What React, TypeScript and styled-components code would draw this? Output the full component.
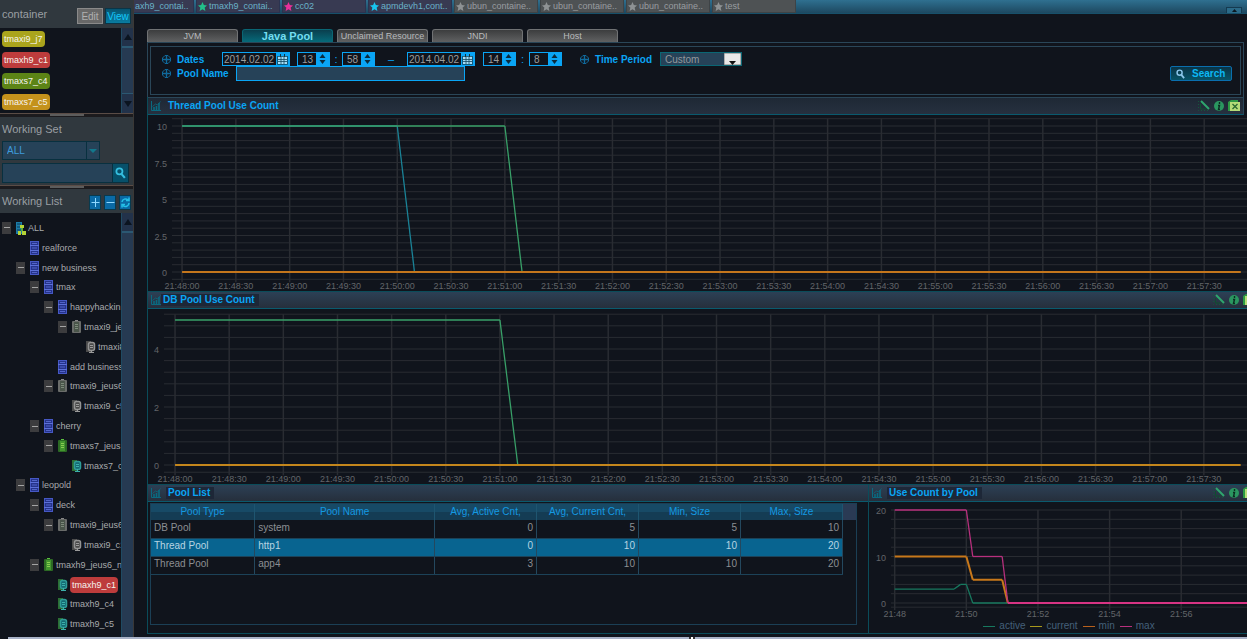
import React from 'react';
import styled, { createGlobalStyle, css } from 'styled-components';

const sans = '"Liberation Sans", sans-serif';

const c = {
  bg: '#10141c',
  side: '#30383e',
  teal: '#0a4c5a',
  steel: '#2a4658',
  blue: '#0aa5f5',
  field: '#264258',
  grid: '#292c32',
  axis: '#626569',
};

const GlobalStyle = createGlobalStyle`
  * { box-sizing: border-box; }
  body { margin: 0; background: ${c.bg}; font-family: ${sans}; font-size: 10px; color: #8c9095; }
  button, input, select { font: inherit; margin: 0; padding: 0; border-radius: 0; outline: none; }
  h1, h2, ul { margin: 0; padding: 0; font-weight: normal; list-style: none; }
`;

const Page = styled.div`
  display: flex;
  overflow: hidden;
`;

/* ---------- sidebar ---------- */

const Sidebar = styled.aside`
  flex: 0 0 134px;
  display: flex;
  flex-direction: column;
  overflow: hidden;
  border-right: 1px solid #3a3836;
  min-width: 0;
`;

const SideHeader = styled.header<{ $height: number }>`
  display: flex;
  align-items: center;
  gap: 2px;
  height: ${(p) => p.$height}px;
  padding: 0 2px;
  background: ${c.side};
`;

const SideTitle = styled.h2`
  flex: 1;
  font-size: 11px;
  line-height: 20px;
  color: #9a9fa3;
`;

const ModeButton = styled.button<{ $active?: boolean }>`
  width: 26px;
  height: 16px;
  margin-top: 4px;
  border: 1px solid ${(p) => (p.$active ? '#0a3547' : '#8a8a8a')};
  background: ${(p) => (p.$active ? 'linear-gradient(#075470, #0a7ca0)' : '#686868')};
  color: ${(p) => (p.$active ? '#14c8fa' : '#b0b0b0')};
  font-size: 10px;
  line-height: 13px;
`;

const Scrolled = styled.div<{ $grow?: boolean }>`
  display: flex;
  overflow: hidden;
  ${(p) => p.$grow ? css`flex: 1;` : css`height: 85px;`}
`;

const Tags = styled.ul`
  flex: 1;
  display: flex;
  flex-direction: column;
  align-items: flex-start;
  gap: 5px;
  padding: 3px 2px;
`;

const Tag = styled.li<{ $color: string }>`
  height: 16px;
  padding: 0 2px;
  border-radius: 4px;
  background: ${(p) => p.$color};
  color: #f6f4ee;
  font-size: 9px;
  line-height: 16px;
  white-space: nowrap;
`;

const Track = styled.div`
  flex: 0 0 12px;
  display: flex;
  flex-direction: column;
  justify-content: space-between;
  background: #263a52;
  border-left: 1px solid #1f4a62;
`;

const ArrowButton = styled.button`
  display: grid;
  place-items: center;
  height: 20px;
  border: 0;
  border-bottom: 2px solid #2b5872;
  background: #22324a;
  &:last-child:not(:first-child) { border-bottom: 0; border-top: 1px solid #2b5872; }
`;

const Splitter = styled.div`
  height: 4px;
  flex: none;
  display: flex;
  justify-content: center;
  background: #1c1b1e;
  border-top: 1px solid #5a4c46;
  &::before { content: ''; width: 34px; height: 2px; background: #5c5c5c; }
`;

const SetSection = styled.section`
  display: flex;
  flex-direction: column;
  height: 68px;
  padding: 2px;
  background: ${c.side};
`;

const ComboWrap = styled.div`
  display: flex;
  align-items: center;
  position: relative;
  width: 98px;
  height: 19px;
  margin: 1px 0 3px;
  border: 1px solid #08303f;
  background: ${c.field};
`;

const SideSelect = styled.select`
  appearance: none;
  width: 100%;
  height: 17px;
  padding-left: 4px;
  border: 0;
  background: transparent;
  color: #3f9bdc;
  font-size: 10px;
`;

const ComboArrow = styled.svg`
  position: absolute;
  right: 0;
  top: 0;
  pointer-events: none;
`;

const SearchRow = styled.form`
  display: flex;
  width: 127px;
  height: 20px;
  border: 1px solid #08303f;
`;

const SideInput = styled.input`
  flex: 1;
  min-width: 0;
  border: 0;
  background: ${c.field};
  color: #9ab;
`;

const FindButton = styled.button`
  display: grid;
  place-items: center;
  width: 16px;
  border: 0;
  border-left: 1px solid #08303f;
  background: #07506a;
`;

const Squares = styled.div`
  display: flex;
  gap: 3px;
  margin-top: 3px;
`;

const SquareButton = styled.button`
  display: grid;
  place-items: center;
  width: 12px;
  height: 15px;
  border: 1px solid #083a4e;
  background: #0a6aa5;
`;

const Tree = styled.ul`
  flex: 1;
  min-width: 0;
  display: flex;
  flex-direction: column;
  overflow: hidden;
  padding: 5px 0 3px;
`;

const Node = styled.li<{ $depth: number }>`
  flex: 1;
  display: flex;
  align-items: center;
  gap: 2px;
  padding-left: ${(p) => 2 + p.$depth * 14}px;
  white-space: nowrap;
  font-size: 9px;
  color: #a8aaac;
`;

const Toggle = styled.button<{ $shown: boolean }>`
  flex: none;
  display: grid;
  place-items: center;
  width: 9px;
  height: 12px;
  border: 0;
  background: #3c3c3e;
  visibility: ${(p) => (p.$shown ? 'visible' : 'hidden')};
  &::before { content: ''; width: 6px; height: 1px; background: #a4a4a4; }
`;

const Glyph = styled.svg`
  flex: none;
  margin-left: 2px;
`;

type Kind = 'root' | 'group' | 'hostOn' | 'hostOff' | 'appOn' | 'appOff';

function NodeIcon({ kind }: { kind: Kind }) {
  if (kind === 'root') {
    return (
      <Glyph width="11" height="14">
        <rect x="1" y="1" width="6" height="12" fill="#1c7ca8" />
        <path d="M2 3h4M2 6h4M2 9h4" stroke="#0b3b58" />
        <path d="M5 4h4v3h-4zM3 10h3v4h-3zM7 10h4v4h-4z" fill="#b5d437" />
        <path d="M7 7v3" stroke="#4fae3c" strokeWidth="2" />
      </Glyph>
    );
  }
  if (kind === 'group') {
    return (
      <Glyph width="11" height="14">
        <rect x="1.5" y="0.5" width="8" height="13" fill="#26348c" stroke="#4658c4" />
        <path d="M1 4.5h9M1 9.5h9" stroke="#5c70d8" />
        <path d="M3 2.5h5M3 7h5M3 11.5h5" stroke="#5365c8" />
      </Glyph>
    );
  }
  if (kind === 'hostOn' || kind === 'hostOff') {
    const on = kind === 'hostOn';
    return (
      <Glyph width="11" height="14">
        <rect x="1" y="1" width="9" height="12" rx="1" fill={on ? '#2c6a24' : '#6a6c6a'} />
        <rect x="3" y="2" width="5" height="10" fill={on ? '#43962f' : '#4a554a'} />
        <path d="M4 4.5h3M4 6.5h3M4 8.5h3" stroke={on ? '#8acc52' : '#7c8a7a'} />
        <path d="M4 0.5h3" stroke={on ? '#5cc040' : '#888'} />
      </Glyph>
    );
  }
  const on = kind === 'appOn';
  return (
    <Glyph width="11" height="14">
      <path d="M1 1h5v11H1z" fill={on ? '#2c6e34' : '#4c4c4c'} />
      <rect x="3.5" y="2.5" width="6" height="8" rx="2" fill={on ? '#156a74' : '#4a4a4a'} stroke={on ? '#2f9c98' : '#949494'} strokeWidth="1.5" />
      <path d="M5 5.5h3M5 7.500h3M4 12.500h5M6.500 10v2" stroke={on ? '#3cb0aa' : '#9a9a9a'} />
    </Glyph>
  );
}

const nodes: { depth: number; label: string; kind: Kind; open?: boolean; active?: boolean }[] = [
  { depth: 0, label: 'ALL', kind: 'root', open: true },
  { depth: 1, label: 'realforce', kind: 'group' },
  { depth: 1, label: 'new business', kind: 'group', open: true },
  { depth: 2, label: 'tmax', kind: 'group', open: true },
  { depth: 3, label: 'happyhackin', kind: 'group', open: true },
  { depth: 4, label: 'tmaxi9_je', kind: 'hostOff', open: true },
  { depth: 5, label: 'tmaxi8', kind: 'appOff' },
  { depth: 3, label: 'add business', kind: 'group' },
  { depth: 3, label: 'tmaxi9_jeus6', kind: 'hostOff', open: true },
  { depth: 4, label: 'tmaxi9_c5', kind: 'appOff' },
  { depth: 2, label: 'cherry', kind: 'group', open: true },
  { depth: 3, label: 'tmaxs7_jeus', kind: 'hostOn', open: true },
  { depth: 4, label: 'tmaxs7_c', kind: 'appOn' },
  { depth: 1, label: 'leopold', kind: 'group', open: true },
  { depth: 2, label: 'deck', kind: 'group', open: true },
  { depth: 3, label: 'tmaxi9_jeus6', kind: 'hostOff', open: true },
  { depth: 4, label: 'tmaxi9_c1', kind: 'appOff' },
  { depth: 2, label: 'tmaxh9_jeus6_n', kind: 'hostOn', open: true },
  { depth: 3, label: 'tmaxh9_c1', kind: 'appOn', active: true },
  { depth: 3, label: 'tmaxh9_c4', kind: 'appOn' },
  { depth: 3, label: 'tmaxh9_c5', kind: 'appOn' },
];

const Arrow = ({ up, color = '#0b1420' }: { up?: boolean; color?: string }) => (
  <svg width="8" height="6"><path d={up ? 'M4 0L8 6H0z' : 'M0 0H8L4 6z'} fill={color} /></svg>
);

const Lens = ({ color, size = 10 }: { color: string; size?: number }) => (
  <svg width={size} height={size + 1} viewBox="0 0 10 11" fill="none" stroke={color}>
    <circle cx="4" cy="4" r="2.8" strokeWidth="1.6" />
    <path d="M6 6.5l3 3.5" strokeWidth="2" />
  </svg>
);

function Side() {
  return (
    <Sidebar>
      <SideHeader $height={28}>
        <SideTitle>container</SideTitle>
        <ModeButton type="button">Edit</ModeButton>
        <ModeButton type="button" $active>View</ModeButton>
      </SideHeader>
      <Scrolled>
        <Tags>
          <Tag $color="#aaa41c">tmaxi9_j7</Tag>
          <Tag $color="#bd3c3c">tmaxh9_c1</Tag>
          <Tag $color="#5c8416">tmaxs7_c4</Tag>
          <Tag $color="#c4921c">tmaxs7_c5</Tag>
        </Tags>
        <Track>
          <ArrowButton type="button" aria-label="Scroll up"><Arrow up /></ArrowButton>
          <ArrowButton type="button" aria-label="Scroll down"><Arrow /></ArrowButton>
        </Track>
      </Scrolled>
      <Splitter />
      <SetSection>
        <SideTitle as="label" htmlFor="working-set">Working Set</SideTitle>
        <ComboWrap>
          <SideSelect id="working-set"><option>ALL</option></SideSelect>
          <ComboArrow width="13" height="17">
            <path d="M0.5 0v17" stroke="#08303f" />
            <path d="M3 7h8l-4 4z" fill="#12788c" />
          </ComboArrow>
        </ComboWrap>
        <SearchRow onSubmit={(e) => e.preventDefault()}>
          <SideInput aria-label="Find in working set" />
          <FindButton aria-label="Find"><Lens color="#35bfe0" size={11} /></FindButton>
        </SearchRow>
      </SetSection>
      <Splitter />
      <SideHeader $height={24}>
        <SideTitle>Working List</SideTitle>
        <Squares>
          <SquareButton type="button" aria-label="Expand all">
            <svg width="9" height="11"><path d="M0.5 5.5h8M4.5 1v9" stroke="#8fd8ff" /></svg>
          </SquareButton>
          <SquareButton type="button" aria-label="Collapse all">
            <svg width="9" height="11"><path d="M0.5 5.5h8" stroke="#8fd8ff" /></svg>
          </SquareButton>
          <SquareButton type="button" aria-label="Refresh">
            <svg width="9" height="11" fill="none" stroke="#25c0e8" strokeWidth="1.5">
              <path d="M1 5a3.5 3.5 0 0 1 6-2M8 0.5v3H5M8 6a3.5 3.5 0 0 1-6 2.5M1 10.5v-3h3" />
            </svg>
          </SquareButton>
        </Squares>
      </SideHeader>
      <Scrolled $grow>
        <Tree>
          {nodes.map((n, i) => (
            <Node key={i} $depth={n.depth}>
              <Toggle type="button" $shown={!!n.open} aria-label={'Collapse ' + n.label} />
              <NodeIcon kind={n.kind} />
              {n.active ? <Tag as="span" $color="#bd3c3c">{n.label}</Tag> : n.label}
            </Node>
          ))}
        </Tree>
        <Track>
          <ArrowButton type="button" aria-label="Scroll up"><Arrow up /></ArrowButton>
        </Track>
      </Scrolled>
    </Sidebar>
  );
}

/* ---------- top strip and tabs ---------- */

const Main = styled.main`
  flex: 1;
  min-width: 0;
`;

const Strip = styled.nav`
  display: flex;
  align-items: flex-start;
  gap: 2px;
  height: 14px;
  overflow: hidden;
  background: linear-gradient(#2f7090, #1d4860);
  border-bottom: 1px solid #17506a;
`;

const StripTab = styled.button<{ $live?: boolean; $short?: boolean }>`
  flex: 0 0 auto;
  display: flex;
  align-items: center;
  gap: 2px;
  width: ${(p) => (p.$short ? 60 : 84)}px;
  height: 13px;
  padding: 0 1px;
  overflow: hidden;
  border: 1px solid ${(p) => (p.$live ? '#2b3350' : '#3e4346')};
  border-top: 0;
  border-left-width: ${(p) => (p.$short ? 0 : 1)}px;
  background: ${(p) => (p.$live ? '#383a52' : '#4e5254')};
  color: ${(p) => (p.$live ? '#6ab2c8' : '#999da0')};
  font-size: 9px;
  line-height: 12px;
  white-space: nowrap;
  svg { flex: none; }
`;

const Collapse = styled.button`
  display: grid;
  place-items: center;
  width: 16px;
  height: 7px;
  margin: 7px 5px 0 auto;
  border: 1px solid #143a50;
  background: #2b6a88;
`;

const Star = ({ color }: { color: string }) => (
  <svg width="9" height="9" viewBox="0 0 10 10">
    <path d="M5 0l1.5 3.4 3.5.4-2.6 2.400.8 3.800L5 8 1.800 10l.8-3.800L0 3.800l3.500-.4z" fill={color} />
  </svg>
);

const stripTabs = [
  { label: 'axh9_contai..', star: '', live: true, short: true },
  { label: 'tmaxh9_contai..', star: '#22c08a', live: true },
  { label: 'cc02', star: '#e8309a', live: true },
  { label: 'apmdevh1,cont..', star: '#18c4ee', live: true },
  { label: 'ubun_containe..', star: '#8e9294' },
  { label: 'ubun_containe..', star: '#8e9294' },
  { label: 'ubun_containe..', star: '#8e9294' },
  { label: 'test', star: '#8e9294' },
];

const Body = styled.div`
  padding: 15px 0 3px 13px;
`;

const Tabs = styled.div`
  display: flex;
  gap: 4px;
`;

const Tab = styled.button<{ $active?: boolean }>`
  width: 91px;
  height: 13px;
  border: 1px solid ${(p) => (p.$active ? '#0a6674' : '#707274')};
  border-bottom: 0;
  border-radius: 3px 3px 0 0;
  background: ${(p) => (p.$active ? 'linear-gradient(#0a3f4e, #066a7a)' : 'linear-gradient(#3c3d3e, #606162)')};
  color: ${(p) => (p.$active ? '#74dcf0' : '#b8babc')};
  font-size: ${(p) => (p.$active ? 11 : 9)}px;
  font-weight: ${(p) => (p.$active ? 'bold' : 'normal')};
  line-height: 13px;
  white-space: nowrap;
`;

/* ---------- filter ---------- */

const FilterFrame = styled.div`
  margin-right: 3px;
  padding: 3px 2px 2px;
  border: 1px solid ${c.steel};
  border-bottom: 0;
`;

const Filter = styled.form`
  display: flex;
  justify-content: space-between;
  align-items: center;
  height: 49px;
  padding: 0 8px 0 11px;
  border: 1px solid ${c.steel};
`;

const FilterRows = styled.div`
  display: flex;
  flex-direction: column;
  height: 37px;
`;

const FilterRow = styled.div`
  display: flex;
  align-items: center;
  height: 14px;
`;

const FieldLabel = styled.label<{ $width: number }>`
  display: flex;
  align-items: center;
  gap: 6px;
  width: ${(p) => p.$width}px;
  color: ${c.blue};
  font-size: 10px;
  font-weight: bold;
  white-space: nowrap;
`;

const Box = styled.span<{ $width: number }>`
  display: flex;
  width: ${(p) => p.$width}px;
  height: 14px;
  border: 1px solid ${c.blue};
  background: ${c.blue};
`;

const BoxInput = styled.input<{ $indent?: boolean }>`
  flex: 1;
  min-width: 0;
  height: 12px;
  border: 0;
  padding-left: ${(p) => (p.$indent ? 4 : 1)}px;
  background: ${c.bg};
  color: #9c9c9c;
  font-size: 10px;
`;

const IconButton = styled.button`
  display: grid;
  place-items: center;
  width: 13px;
  height: 12px;
  border: 0;
  background: ${c.blue};
`;

const Between = styled.span<{ $width: number }>`
  width: ${(p) => p.$width}px;
  color: ${c.blue};
  font-size: 11px;
  text-align: center;
  line-height: 12px;
`;

const Gap = styled.span<{ $width: number }>`
  width: ${(p) => p.$width}px;
`;

const NameInput = styled.input`
  width: 229px;
  height: 15px;
  border: 1px solid ${c.blue};
  background: ${c.field};
  color: #c0c8d0;
`;

const PeriodWrap = styled.span`
  position: relative;
  display: flex;
  width: 82px;
  height: 14px;
  border: 1px solid #0a6674;
  background: ${c.field};
`;

const Period = styled.select`
  appearance: none;
  width: 100%;
  border: 0;
  padding-left: 4px;
  background: transparent;
  color: #93989c;
  font-size: 10px;
`;

const SearchButton = styled.button`
  display: flex;
  align-items: center;
  gap: 7px;
  width: 62px;
  height: 15px;
  margin-top: 6px;
  padding: 0 5px;
  border: 1px solid #0a6fae;
  border-radius: 2px;
  background: linear-gradient(#0a3446, #075468);
  color: #0cb8f4;
  font-size: 10px;
  font-weight: bold;
`;

const Cross = () => (
  <svg width="9" height="9" fill="none" stroke="#106a9c">
    <path d="M3 0.5h3l2.5 2.5v3L6 8.500H3L0.500 6V3z" />
    <path d="M4.500 1v7M1 4.500h7" strokeWidth="1.400" />
  </svg>
);

const DateField = ({ value, label }: { value: string; label: string }) => (
  <Box $width={68}>
    <BoxInput defaultValue={value} aria-label={label} />
    <IconButton type="button" aria-label={'Pick ' + label}>
      <svg width="11" height="11">
        <rect x="1" y="2" width="9" height="8" fill="#a4dcf6" />
        <path d="M1 2.5h9M1 5.500h9M1 7.500h9M0.500 2v8.500h10V2M4 3v7M7 3v7" stroke="#12465e" strokeWidth="0.800" fill="none" />
        <path d="M3.500 0v3M7.500 0v3" stroke="#12303e" />
      </svg>
    </IconButton>
  </Box>
);

const StepField = ({ value, label }: { value: string; label: string }) => (
  <Box $width={33}>
    <BoxInput $indent defaultValue={value} aria-label={label} />
    <IconButton type="button" aria-label={'Change ' + label}>
      <svg width="7" height="10"><path d="M3.5 0L6.500 4H0.500zM0.500 6h6L3.500 10z" fill="#0b2a3c" /></svg>
    </IconButton>
  </Box>
);

function FilterForm() {
  return (
    <FilterFrame>
      <Filter onSubmit={(e) => e.preventDefault()}>
        <FilterRows>
          <FilterRow>
            <FieldLabel as="span" $width={60}><Cross />Dates</FieldLabel>
            <DateField value="2014.02.02" label="start date" />
            <Gap $width={7} />
            <StepField value="13" label="start hour" />
            <Between $width={12}>:</Between>
            <StepField value="58" label="start minute" />
            <Between $width={32}>–</Between>
            <DateField value="2014.04.02" label="end date" />
            <Gap $width={8} />
            <StepField value="14" label="end hour" />
            <Between $width={13}>:</Between>
            <StepField value="8" label="end minute" />
            <Gap $width={18} />
            <FieldLabel htmlFor="period" $width={80}><Cross />Time Period</FieldLabel>
            <PeriodWrap>
              <Period id="period"><option>Custom</option></Period>
              <ComboArrow width="17" height="12">
                <rect width="17" height="12" fill="#e8e8e8" stroke="#777" />
                <path d="M5 8h7l-3.5 4z" fill="#111" />
              </ComboArrow>
            </PeriodWrap>
          </FilterRow>
          <FilterRow>
            <FieldLabel htmlFor="pool-name" $width={74}><Cross />Pool Name</FieldLabel>
            <NameInput id="pool-name" />
          </FilterRow>
        </FilterRows>
        <SearchButton><Lens color="#8cc8ec" size={9} />Search</SearchButton>
      </Filter>
    </FilterFrame>
  );
}

/* ---------- panels ---------- */

const Content = styled.div`
  border-left: 1px solid ${c.teal};
  border-bottom: 1px solid ${c.teal};
`;

const PanelHeader = styled.header<{ $inset?: boolean; $tight?: boolean }>`
  display: flex;
  align-items: center;
  gap: ${(p) => (p.$tight ? 0 : 5)}px;
  height: 18px;
  margin-right: ${(p) => (p.$inset ? 3 : 0)}px;
  padding-left: 3px;
  overflow: hidden;
  border-top: 1px solid ${(p) => (p.$inset ? c.steel : c.teal)};
  border-bottom: 1px solid #0a5a6e;
  border-right: ${(p) => (p.$inset ? '1px solid ' + c.steel : '0')};
  background: ${(p) => (p.$inset ? 'linear-gradient(#1e2835, #26303f)' : 'linear-gradient(#2c4055, #262f3c)')};
`;

const PanelTitle = styled.h2<{ $shade?: boolean }>`
  padding: 0 4px 0 2px;
  background: ${(p) => (p.$shade ? '#1d2737' : 'transparent')};
  color: ${c.blue};
  font-size: 10px;
  font-weight: bold;
  line-height: 12px;
  white-space: nowrap;
`;

const Tools = styled.div<{ $inset?: boolean }>`
  display: flex;
  flex: none;
  gap: 3px;
  margin: 0 ${(p) => (p.$inset ? 3 : -8)}px 0 auto;
`;

const ToolButton = styled.button`
  display: grid;
  place-items: center;
  width: 12px;
  height: 12px;
  border: 0;
  background: none;
`;

function Header({ title, inset, tight, tools = true }: { title: string; inset?: boolean; tight?: boolean; tools?: boolean }) {
  return (
    <PanelHeader $inset={inset} $tight={tight}>
      <svg width="10" height="10" fill="none" stroke="#0a6a80">
        <path d="M0.500 0v9.500H10" />
        <path d="M3 9V6M5.500 9V5M8 9V2" strokeWidth="1.600" />
        <path d="M1.500 5.500l3-2.500 2 1 3-3.500" strokeWidth="0.800" />
      </svg>
      <PanelTitle $shade={!inset}>{title}</PanelTitle>
      {tools && (
        <Tools $inset={inset}>
          <ToolButton type="button" aria-label="Edit chart">
            <svg width="12" height="12" fill="none">
              <path d="M3 1l8 8" stroke="#2fa66e" strokeWidth="2" />
              <path d="M2.5 4v5h6" stroke="#0e5030" />
              <path d="M0.5 1v9.500h11" stroke="#14573c" strokeDasharray="1 2" />
            </svg>
          </ToolButton>
          <ToolButton type="button" aria-label="Information">
            <svg width="12" height="12">
              <circle cx="6" cy="6" r="5" fill="#2a9660" />
              <path d="M6.5 2v2M5 5.500h1.500L5.500 9.500H7" stroke="#0c2b22" strokeWidth="1.400" fill="none" />
            </svg>
          </ToolButton>
          <ToolButton type="button" aria-label="Export to spreadsheet">
            <svg width="12" height="12">
              <path d="M0 2l3-2h7v3H3v8H0z" fill="#2c9a44" />
              <rect x="2" y="2" width="10" height="9" fill="#b4dc78" />
              <path d="M4.500 4l5 5M9.500 4l-5 5" stroke="#2a6a30" strokeWidth="1.300" />
            </svg>
          </ToolButton>
        </Tools>
      )}
    </PanelHeader>
  );
}

const Plot = styled.svg`
  display: block;
  width: 100%;
  overflow: hidden;
  text { fill: ${c.axis}; font-size: 9px; }
`;

interface Series { color: string; width?: number; points: [number, number][] }

interface ChartProps {
  label: string;
  height: number;
  gridLeft: number;
  start: number;
  step: number;
  ticks: string[];
  zeroY: number;
  unit: number;
  grid: number[];
  yLabels: number[];
  labelY: number;
  series: Series[];
}

/* Horizontal positions are shares of the width, so the plot stretches with the window. */
function Chart(p: ChartProps) {
  const x = (tick: number) => p.start + tick * p.step + '%';
  const y = (v: number) => p.zeroY - v * p.unit;
  const top = y(Math.max(...p.grid));
  const bottom = y(Math.min(...p.grid));
  return (
    <Plot height={p.height} role="img" aria-label={p.label}>
      {p.grid.map((v) => (
        <line key={v} x1={p.gridLeft} x2="100%" y1={y(v)} y2={y(v)} stroke={c.grid} />
      ))}
      {p.ticks.map((t, i) => (
        <g key={t}>
          <line x1={x(i)} x2={x(i)} y1={top} y2={bottom + 3} stroke={c.grid} strokeWidth="1.5" />
          <text x={x(i)} y={p.labelY} textAnchor="middle">{t}</text>
        </g>
      ))}
      {p.yLabels.map((v) => (
        <text key={v} x={p.gridLeft - 5} y={y(v) + 4} textAnchor="end">{v}</text>
      ))}
      {p.series.map((s, n) =>
        s.points.slice(1).map((pt, i) => (
          <line
            key={n + '-' + i}
            x1={x(s.points[i][0])}
            y1={y(s.points[i][1])}
            x2={x(pt[0])}
            y2={y(pt[1])}
            stroke={s.color}
            strokeWidth={s.width ?? 1.3}
          />
        )),
      )}
    </Plot>
  );
}

const halfMinutes = Array.from({ length: 20 }, (_, i) =>
  '21:' + (48 + Math.floor(i / 2)) + ':' + (i % 2 ? '30' : '00'));

const range = (from: number, step: number, count: number) =>
  Array.from({ length: count }, (_, i) => Math.round((from + i * step) * 100) / 100);

const Bottom = styled.div`
  display: grid;
  grid-template-columns: 720fr 379fr;
`;

const Panel = styled.section<{ $divided?: boolean }>`
  min-width: 0;
  border-left: ${(p) => (p.$divided ? '1px solid ' + c.teal : '0')};
`;

const TableBox = styled.div`
  height: 122px;
  margin: 1px 11px 8px 2px;
  padding-right: 13px;
  border: 1px solid #1b3f55;
  background: linear-gradient(#2a3a54, #2a3a54) top right / 13px 16px no-repeat;
`;

const Table = styled.table`
  width: 100%;
  table-layout: fixed;
  border-collapse: collapse;
  font-size: 10px;
  line-height: 14px;
`;

const Th = styled.th<{ $share: number }>`
  width: ${(p) => p.$share}%;
  height: 16px;
  padding: 0;
  border-right: 1px solid #1e5570;
  background: linear-gradient(#174a66 50%, #143c54 50%);
  color: #1499e2;
  font-weight: normal;
  white-space: nowrap;
`;

const Td = styled.td<{ $number?: boolean }>`
  height: 18px;
  padding: 0 3px 2px;
  border-right: 1px solid #24485e;
  border-bottom: 1px solid #1c4258;
  text-align: ${(p) => (p.$number ? 'right' : 'left')};
`;

const Row = styled.tr<{ $selected?: boolean }>`
  background: ${(p) => (p.$selected ? '#086490' : 'transparent')};
  color: ${(p) => (p.$selected ? '#b8d4e2' : '#8c8f93')};
`;

const columns: [string, number][] = [
  ['Pool Type', 15],
  ['Pool Name', 26],
  ['Avg, Active Cnt,', 14.75],
  ['Avg, Current Cnt,', 14.75],
  ['Min, Size', 14.75],
  ['Max, Size', 14.75],
];

const rows = [
  ['DB Pool', 'system', 0, 5, 5, 10],
  ['Thread Pool', 'http1', 0, 10, 10, 20],
  ['Thread Pool', 'app4', 3, 10, 10, 20],
];

const Legend = styled.ul`
  display: flex;
  justify-content: center;
  gap: 5px;
  height: 14px;
  padding-left: 22px;
  line-height: 12px;
  color: #44607a;
  font-size: 10px;
`;

const LegendItem = styled.li<{ $color: string }>`
  display: flex;
  align-items: center;
  gap: 4px;
  &::before { content: ''; width: 12px; height: 1px; background: ${(p) => p.$color}; }
`;

const Footer = styled.footer`
  display: flex;
  justify-content: center;
  height: 2px;
  margin-left: 8px;
  padding-left: 128px;
  background: #a9b3c8;
`;

export default function App() {
  return (
    <>
      <GlobalStyle />
      <Page>
        <Side />
        <Main>
          <Strip>
            {stripTabs.map((t, i) => (
              <StripTab key={i} type="button" $live={t.live} $short={t.short}>
                {t.star && <Star color={t.star} />}
                {t.label}
              </StripTab>
            ))}
            <Collapse type="button" aria-label="Collapse header">
              <svg width="5" height="3"><path d="M2.5 0L5 3H0z" fill="#0a1820" /></svg>
            </Collapse>
          </Strip>
          <Body>
            <Tabs>
              <Tab type="button">JVM</Tab>
              <Tab type="button" $active>Java Pool</Tab>
              <Tab type="button">Unclaimed Resource</Tab>
              <Tab type="button">JNDI</Tab>
              <Tab type="button">Host</Tab>
            </Tabs>
            <FilterForm />
            <Content>
              <Header title="Thread Pool Use Count" inset />
              <Chart
                label="Thread Pool Use Count"
                height={176}
                gridLeft={24}
                start={3.1}
                step={4.895}
                ticks={halfMinutes}
                zeroY={157}
                unit={14.6}
                grid={range(-0.5, 0.5, 23)}
                yLabels={[0, 2.5, 5, 7.5, 10]}
                labelY={174}
                series={[
                  { color: '#1a8296', points: [[0, 10], [4, 10], [4.32, 0]] },
                  { color: '#38a068', points: [[0, 10], [6, 10], [6.32, 0]] },
                  { color: '#c4761c', width: 2, points: [[0, 0], [19.68, 0]] },
                ]}
              />
              <Header title="DB Pool Use Count" tight />
              <Chart
                label="DB Pool Use Count"
                height={175}
                gridLeft={16}
                start={2.46}
                step={4.927}
                ticks={halfMinutes}
                zeroY={156}
                unit={29}
                grid={[-0.25, ...range(0, 0.4, 14)]}
                yLabels={[0, 2, 4]}
                labelY={173}
                series={[
                  { color: '#38a068', points: [[0, 5], [6, 5], [6.33, 0]] },
                  { color: '#c4861c', width: 2, points: [[0, 0], [19.68, 0]] },
                ]}
              />
              <Bottom>
                <Panel>
                  <Header title="Pool List" tools={false} />
                  <TableBox>
                    <Table>
                      <thead>
                        <tr>{columns.map(([name, share]) => <Th key={name} $share={share}>{name}</Th>)}</tr>
                      </thead>
                      <tbody>
                        {rows.map((r, i) => (
                          <Row key={i} $selected={i === 1}>
                            {r.map((v, j) => <Td key={j} $number={j > 1}>{v}</Td>)}
                          </Row>
                        ))}
                      </tbody>
                    </Table>
                  </TableBox>
                </Panel>
                <Panel $divided>
                  <Header title="Use Count by Pool" />
                  <Chart
                    label="Use Count by Pool"
                    height={117}
                    gridLeft={22}
                    start={6.8}
                    step={18.95}
                    ticks={['21:48', '21:50', '21:52', '21:54', '21:56']}
                    zeroY={101}
                    unit={4.65}
                    grid={[-0.9, ...range(0, 2, 11)]}
                    yLabels={[0, 10, 20]}
                    labelY={115}
                    series={[
                      { color: '#17795f', points: [[0, 3], [0.83, 3], [0.92, 4], [1, 4], [1.09, 0], [1.6, 0]] },
                      { color: '#c8781a', width: 2, points: [[0, 10], [1, 10], [1.09, 5], [1.5, 5], [1.58, 0]] },
                      { color: '#b8307e', points: [[0, 20], [1, 20], [1.09, 10], [1.5, 10], [1.58, 0]] },
                      { color: '#d83484', width: 2, points: [[1.58, 0], [5, 0]] },
                    ]}
                  />
                  <Legend>
                    <LegendItem $color="#17795f">active</LegendItem>
                    <LegendItem $color="#a8981c">current</LegendItem>
                    <LegendItem $color="#b8601c">min</LegendItem>
                    <LegendItem $color="#b8307e">max</LegendItem>
                  </Legend>
                </Panel>
              </Bottom>
            </Content>
          </Body>
        </Main>
      </Page>
      <Footer>
        <svg width="6" height="2"><rect width="6" height="2" fill="#333" /><rect x="2" width="2" height="2" fill="#fff" /></svg>
      </Footer>
    </>
  );
}
